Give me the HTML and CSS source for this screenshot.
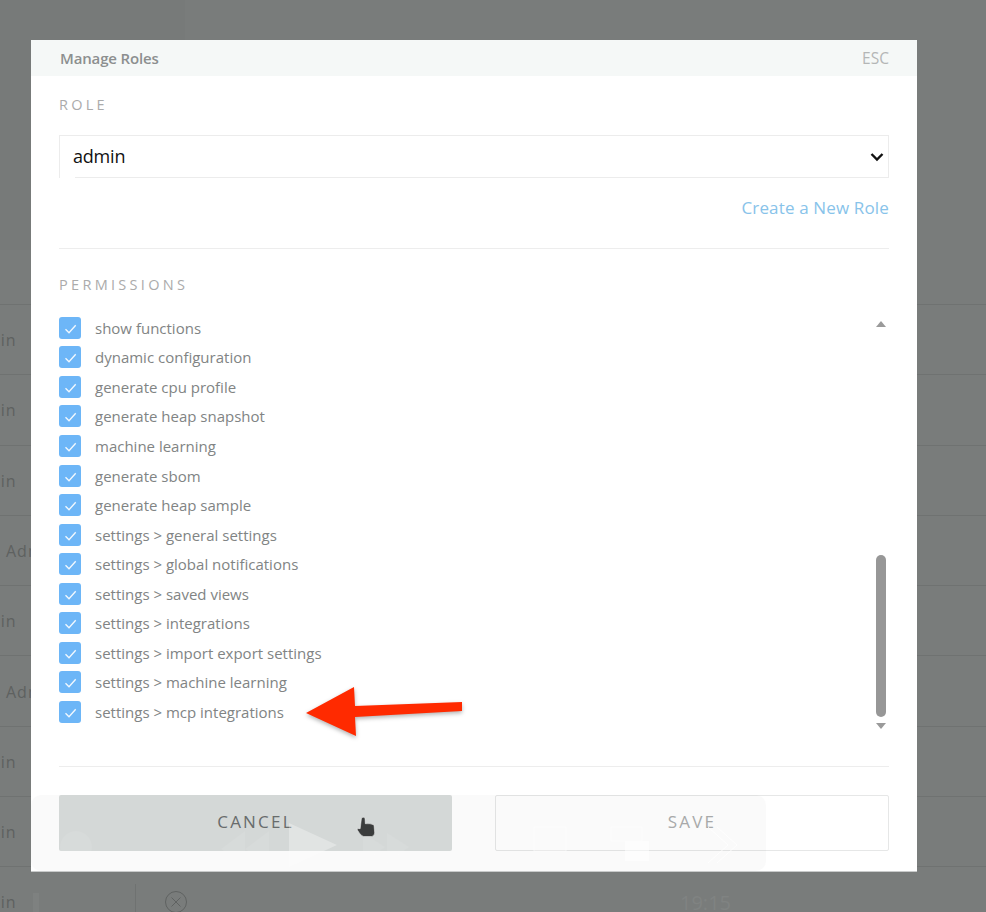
FILE: index.html
```html
<!DOCTYPE html>
<html lang="en">
<head>
<meta charset="utf-8">
<title>Manage Roles</title>
<link rel="stylesheet" href="styles.css">
</head>
<body>
<svg class="defs" width="0" height="0" aria-hidden="true"><symbol id="tick" viewBox="0 0 22 22"><path d="M6.500 12.200 10 15.700 16.700 8.300" fill="none" stroke="#fff" stroke-width="1.400" stroke-opacity=".9"/></symbol></svg>

<div class="backdrop">
  <div class="bg-top"><div class="bg-side"></div></div>
  <div class="bg-row"><span class="who who-in">Admin</span></div>
  <div class="bg-row"><span class="who who-in">Admin</span></div>
  <div class="bg-row"><span class="who who-in">Admin</span></div>
  <div class="bg-row"><span class="who who-adm">Admin</span></div>
  <div class="bg-row"><span class="who who-in">Admin</span></div>
  <div class="bg-row"><span class="who who-adm">Admin</span></div>
  <div class="bg-row"><span class="who who-in">Admin</span></div>
  <div class="bg-row"><span class="who who-in">Admin</span></div>
  <div class="bg-row bg-row-last">
    <span class="who who-in">Admin</span>
    <span class="bg-cell">
      <svg class="bg-x" width="24" height="24" viewBox="0 0 24 24"><circle cx="12" cy="12" r="10.500" fill="none" stroke="#5f6261" stroke-width="1"/><path d="M7.500 7.500 16.500 16.500M16.500 7.500 7.500 16.500" stroke="#5f6261" stroke-width="1"/></svg>
    </span>
    <span class="bg-time">19:15</span>
  </div>
</div>

<div class="modal">
  <header class="modal-head"><span class="modal-title">Manage Roles</span><span class="modal-esc">ESC</span></header>
  <div class="modal-body">
    <div class="label label-role">ROLE</div>
    <div class="select-wrap">
      <select class="role-select"><option>admin</option></select>
      <svg class="chevron" width="14" height="10" viewBox="0 0 14 10" aria-hidden="true"><path d="M1.500 2 7 7.500 12.500 2" fill="none" stroke="#111" stroke-width="2.400"/></svg>
    </div>
    <div class="link-row"><a class="link">Create a New Role</a></div>
    <hr class="rule rule-a">
    <div class="label label-perm">PERMISSIONS</div>
    <div class="perm-wrap">
      <ul class="perm-list">
        <li class="perm"><span class="box"><svg width="22" height="22"><use href="#tick"/></svg></span>show functions</li>
        <li class="perm"><span class="box"><svg width="22" height="22"><use href="#tick"/></svg></span>dynamic configuration</li>
        <li class="perm"><span class="box"><svg width="22" height="22"><use href="#tick"/></svg></span>generate cpu profile</li>
        <li class="perm"><span class="box"><svg width="22" height="22"><use href="#tick"/></svg></span>generate heap snapshot</li>
        <li class="perm"><span class="box"><svg width="22" height="22"><use href="#tick"/></svg></span>machine learning</li>
        <li class="perm"><span class="box"><svg width="22" height="22"><use href="#tick"/></svg></span>generate sbom</li>
        <li class="perm"><span class="box"><svg width="22" height="22"><use href="#tick"/></svg></span>generate heap sample</li>
        <li class="perm"><span class="box"><svg width="22" height="22"><use href="#tick"/></svg></span>settings &gt; general settings</li>
        <li class="perm"><span class="box"><svg width="22" height="22"><use href="#tick"/></svg></span>settings &gt; global notifications</li>
        <li class="perm"><span class="box"><svg width="22" height="22"><use href="#tick"/></svg></span>settings &gt; saved views</li>
        <li class="perm"><span class="box"><svg width="22" height="22"><use href="#tick"/></svg></span>settings &gt; integrations</li>
        <li class="perm"><span class="box"><svg width="22" height="22"><use href="#tick"/></svg></span>settings &gt; import export settings</li>
        <li class="perm"><span class="box"><svg width="22" height="22"><use href="#tick"/></svg></span>settings &gt; machine learning</li>
        <li class="perm"><span class="box"><svg width="22" height="22"><use href="#tick"/></svg></span>settings &gt; mcp integrations</li>
      </ul>
      <div class="scrollbar">
        <span class="sb-up"></span>
        <span class="sb-thumb"></span>
        <span class="sb-down"></span>
      </div>
    </div>
    <hr class="rule rule-b">
    <div class="actions">
      <button class="btn btn-cancel">CANCEL</button>
      <button class="btn btn-save">SAVE</button>
    </div>
  </div>
  <svg class="ghost" width="735" height="76" viewBox="0 0 735 76" aria-hidden="true">
    <rect x="0" y="0" width="735" height="76" rx="10" fill="#7a7d7c" fill-opacity=".035"/>
    <path d="M258 28 258 72 306 50Z" fill="#fff" fill-opacity=".3"/>
    <path d="M214 36 190 54 214 70ZM238 36 214 54 238 70Z" fill="#fff" fill-opacity=".08"/>
    <path d="M332 38 354 52 332 68ZM356 38 378 52 356 68Z" fill="#fff" fill-opacity=".08"/>
    <circle cx="45" cy="52" r="16" fill="#fff" fill-opacity=".08"/>
    <rect x="503" y="32" width="32" height="24" fill="none" stroke="#fff" stroke-opacity=".6"/>
    <path d="M580 32h31v14h-31z" fill="none" stroke="#fff" stroke-opacity=".6"/>
    <path d="M594 46h24v20h-24z" fill="#fff" fill-opacity=".5"/>
    <path d="M677 32 697 50 677 68M686 32 706 50 686 68" fill="none" stroke="#fff" stroke-opacity=".8"/>
  </svg>
</div>

<svg class="annot" width="986" height="912" viewBox="0 0 986 912" aria-hidden="true">
  <path class="annot-arrow" d="M306 713 354 687 355 706 462 702 462 711 355 717 356 736Z"/>
  <path class="annot-hand" d="M361.500 818q1.800-1.500 3.500 0l.3 5.700q5-.6 8.700 1.300l.7 8q-.5 3.200-3 3.500h-8q-3-.5-6-6l-.7-2 3.200 .2z"/>
</svg>
</body>
</html>
```

FILE: styles.css
```css
* { box-sizing: border-box; }
html, body { margin: 0; height: 100%; }
body {
  width: 986px;
  height: 912px;
  overflow: hidden;
  background: #797c7b;
  font-family: "Open Sans", "Noto Sans", sans-serif;
  position: relative;
}
.defs { position: absolute; }

/* dimmed page behind the dialog */
.backdrop { height: 912px; overflow: hidden; }
.bg-top { height: 304px; }
.bg-side { width: 185px; height: 250px; background: #777a79; }
.bg-row {
  height: 70.300px;
  display: flex;
  align-items: center;
  border-top: 1px solid #6f7271;
  font-size: 16px;
  letter-spacing: 1px;
  color: #5e6160;
  padding-top: 1px;
}
.who { display: block; white-space: nowrap; }
.who-in { margin-left: -37px; width: 172px; flex: none; }
.who-adm { margin-left: 6px; width: 129px; flex: none; }
.bg-row-last { align-items: flex-start; padding-top: 24px; position: relative; }
.bg-row-last::after {
  content: "";
  position: absolute;
  left: 33px;
  top: 26px;
  width: 6px;
  height: 50px;
  background: #7e8180;
}
.bg-cell {
  flex: none;
  width: 545px;
  height: 60px;
  margin-top: -7px;
  padding: 6px 0 0 28px;
  border-left: 1px solid #6f7271;
}
.bg-x { display: block; }
.bg-time { font-size: 20px; letter-spacing: 0; color: #808382; margin-top: -2px; }

/* dialog */
.modal {
  position: absolute;
  left: 31px;
  top: 40px;
  width: 886px;
  height: 832px;
  background: #fff;
  border-bottom: 1px solid #c8caca;
  overflow: hidden;
}
.modal-head {
  height: 36px;
  padding: 0 28px 0 29px;
  background: #f5f8f7;
  display: flex;
  justify-content: space-between;
  align-items: center;
  font-size: 15px;
  letter-spacing: -.15px;
}
.modal-title { font-weight: 600; color: #8c8f8f; }
.modal-esc { color: #b4b6b6; font-size: 15.500px; letter-spacing: 0; }
.modal-body { padding: 0 28px; }
.label {
  font-size: 14.500px;
  letter-spacing: 3.200px;
  color: #ababab;
  line-height: 20px;
}
.label-role { padding-top: 19px; height: 59px; }
.label-perm { height: 20px; margin-top: 26px; letter-spacing: 3.300px; }
.select-wrap { position: relative; width: 830px; }
.select-wrap::after {
  content: "";
  position: absolute;
  left: 1px;
  bottom: 0;
  width: 15px;
  height: 1px;
  background: #fff;
}
.role-select {
  display: block;
  width: 830px;
  height: 43px;
  padding: 0 10px 2px 13px;
  margin: 0;
  appearance: none;
  background: #fff;
  border: 1px solid #ececec;
  border-radius: 0;
  font: 18px "Open Sans", "Noto Sans", sans-serif;
  letter-spacing: -.2px;
  color: #111;
}
.chevron { position: absolute; right: 5px; top: 17px; }
.link-row { display: flex; justify-content: flex-end; height: 61px; padding-top: 17px; line-height: 26px; }
.link { font-size: 17px; letter-spacing: .15px; color: #88c3ea; }
.rule { margin: 0; border: 0; height: 1px; background: #ededed; width: 830px; }
.rule-a { margin-top: 9px; }
.perm-wrap { position: relative; height: 471px; padding-top: 18px; }
.perm-list { list-style: none; margin: 0; padding: 0; }
.perm {
  display: flex;
  align-items: center;
  height: 29.550px;
  font-size: 15px;
  color: #818484;
}
.box {
  flex: none;
  width: 22px;
  height: 22px;
  margin-right: 14px;
  border-radius: 3px;
  background: #6db6f7;
}
.box svg { display: block; }
.scrollbar {
  position: absolute;
  left: 817px;
  top: 14px;
  width: 10px;
  height: 430px;
}
.sb-up, .sb-down {
  position: absolute;
  left: 0;
  width: 0;
  height: 0;
  border-left: 5px solid transparent;
  border-right: 5px solid transparent;
}
.sb-up { top: 12px; border-bottom: 6px solid #9a9a9a; }
.sb-down { top: 414px; border-top: 6px solid #9a9a9a; }
.sb-thumb {
  position: absolute;
  left: 0;
  top: 246px;
  width: 10px;
  height: 162px;
  border-radius: 5px;
  background: #979797;
}
.actions { display: flex; justify-content: space-between; padding-top: 28px; }
.btn {
  height: 56px;
  border-radius: 2px;
  font: 17px "Open Sans", "Noto Sans", sans-serif;
  letter-spacing: 2.200px;
  padding: 0 0 4px;
}
.btn-cancel { width: 393px; background: #d8dcdb; border: 0; color: #686c6c; }
.btn-save { width: 394px; background: transparent; border: 1px solid #e6e7e7; color: #aaacac; }
.ghost { position: absolute; left: 0; top: 755px; pointer-events: none; }

/* annotation layer */
.annot { position: absolute; left: 0; top: 0; pointer-events: none; }
.annot-arrow { fill: #ff2a00; filter: drop-shadow(0 2px 2px rgba(0,0,0,.3)); }
.annot-hand { fill: #3a3c3c; stroke: #fff; stroke-opacity: .6; stroke-width: .8; }
```
